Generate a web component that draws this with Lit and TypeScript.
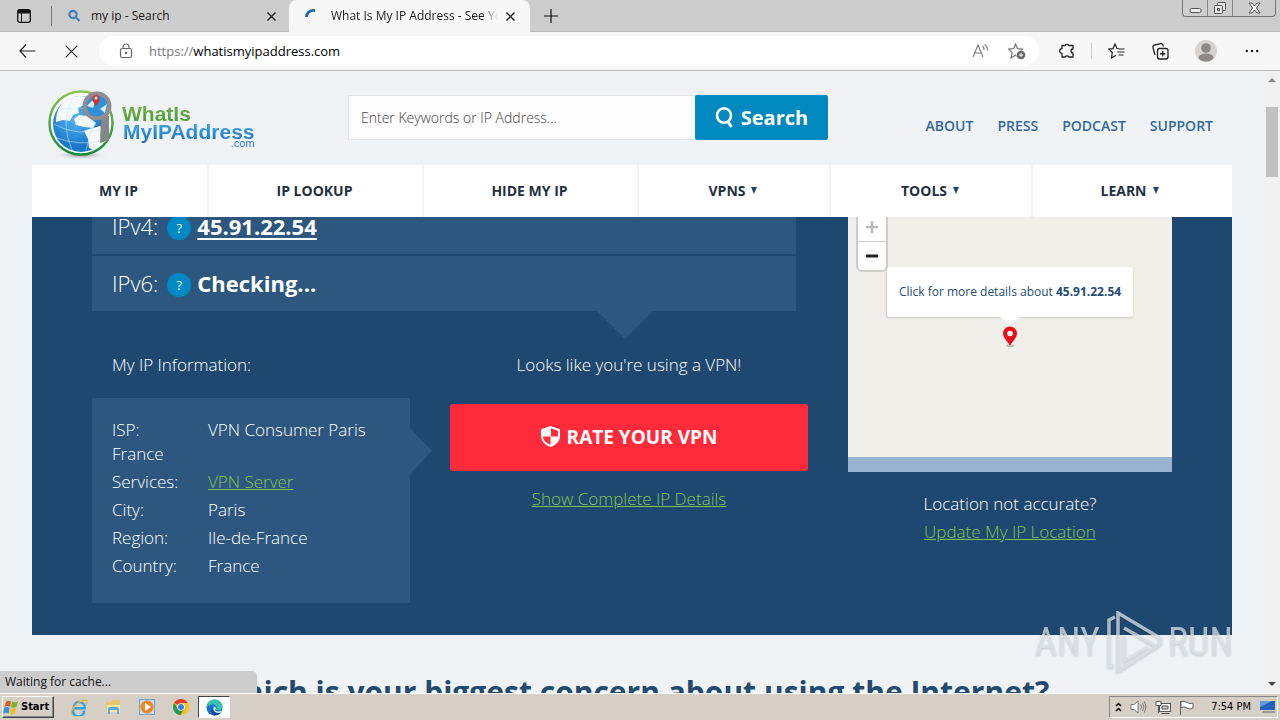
import { LitElement, html, css, svg } from "lit";
import { customElement } from "lit/decorators.js";

@customElement("browser-chrome")
class BrowserChrome extends LitElement {
  static styles = css`
    :host { display: block; font: 12px/16px "Open Sans", sans-serif; color: #1b1b1b; }
    * { box-sizing: border-box; }
    button { border: 0; padding: 0; background: none; display: grid; place-items: center; color: inherit; font: inherit; }
    svg { display: block; }
    .strip { display: flex; height: 32px; background: #cdcdcd; border-bottom: 1px solid #bdbdbd; }
    .panel { width: 48px; }
    .tab { display: flex; align-items: center; position: relative; height: 32px; padding: 0 13px 0 16px; }
    .tab .label { flex: 1; margin-left: 10px; white-space: nowrap; overflow: hidden; }
    .first { width: 238px; margin-left: 3px; }
    .first::before { content: ""; width: 1px; height: 20px; background: #777; position: absolute; left: 0; top: 6px; }
    .active { width: 241px; padding-right: 15px; background: #f7f7f7; border-radius: 8px 8px 0 0; }
    .active .label { mask-image: linear-gradient(to right, #000 90%, transparent); margin: 0 8px 0 12px; }
    .new { width: 42px; }
    .controls { display: flex; margin-left: auto; margin-right: 4px; height: 17px; border: 1px solid #777; border-top: 0; border-radius: 0 0 4px 4px; color: #555; }
    .controls button { width: 25px; border-right: 1px solid #888; }
    .controls button:last-child { width: 42px; border: 0; }
    .bar { display: flex; align-items: center; height: 39px; background: #f7f7f7; border-bottom: 1px solid #bcbcbc; padding: 0 5px; }
    .bar > button { width: 44px; height: 32px; }
    .bar > .tool { width: 46px; }
    .bar > .favorites { width: 42px; }
    .address { flex: 1; display: flex; align-items: center; height: 30px; background: #fff; border-radius: 15px; margin-left: 6px; padding: 0 13px 0 20px; }
    .url { flex: 1; margin-left: 16px; font-size: 13px; line-height: 18px; color: #000; }
    .url span { color: #777; }
    .address button { margin-left: 18px; }
    .sep { width: 1px; height: 16px; background: #ccc; margin-right: 3px; }
    .bar > .puzzle { width: 36px; margin: 0 6px 0 10px; }
  `;
  render() {
    return html`
      <div class="strip">
        <button class="panel" aria-label="Tab actions"><svg width="14" height="14" viewBox="0 0 14 14"><rect x=".7" y=".7" width="12.6" height="12.6" rx="2" fill="none" stroke="#111" stroke-width="1.3"/><path d="M1 1h12v3.5H1z" fill="#111"/><path d="M4.5 4v9" stroke="#111"/></svg></button>
        <div class="tab first">
          <svg width="14" height="14" viewBox="0 0 14 14" fill="none" stroke="#3d7fbd" stroke-width="2.2"><circle cx="6" cy="5.500" r="3.600"/><path d="M8.500 8l4 4"/></svg>
          <span class="label">my ip - Search</span>
          <button aria-label="Close tab">${cross(9, 1.6)}</button>
        </div>
        <div class="tab active">
          <svg width="14" height="14" viewBox="0 0 14 14" fill="none" stroke="#2068b0" stroke-width="2.800"><path d="M1.500 8c0-4 3-7 8.500-6.500"/></svg>
          <span class="label">What Is My IP Address - See Your Public Address</span>
          <button aria-label="Close tab">${cross(9, 1.6)}</button>
        </div>
        <button class="new" aria-label="New tab"><svg width="14" height="14" viewBox="0 0 14 14"><path d="M7 0v14M0 7h14" stroke="#111" stroke-width="1.200"/></svg></button>
        <div class="controls">
          <button aria-label="Minimize"><svg width="13" height="16" viewBox="0 0 13 16"><rect x="1" y="8.500" width="11" height="4" rx="1.500" fill="#eee" stroke="#555"/></svg></button>
          <button aria-label="Restore"><svg width="14" height="14" viewBox="0 0 14 14" fill="#e5e5e5" stroke="#555"><rect x="4.500" y="1.500" width="8" height="8" rx="1"/><rect x="1.500" y="4.500" width="8" height="8" rx="1"/><rect x="4.500" y="7.500" width="2" height="2"/></svg></button>
          <button aria-label="Close"><svg width="13" height="12" viewBox="0 0 13 12"><path d="M1 1h3l2.500 3L9 1h3L8.500 6l3.500 5H9L6.500 8 4 11H1l3.500-5z" fill="#eee" stroke="#555"/></svg></button>
        </div>
      </div>
      <div class="bar">
        <button aria-label="Back"><svg width="17" height="14" viewBox="0 0 17 14" fill="none" stroke="#222" stroke-width="1.200"><path d="M7 .5L1 7l6 6.500M1 7h15.500"/></svg></button>
        <button aria-label="Stop">${cross(13, 0.8)}</button>
        <div class="address">
          <svg width="14" height="16" viewBox="0 0 14 16" fill="none" stroke="#666" stroke-width="1.200"><rect x="1.500" y="5.500" width="11" height="9" rx="1.500"/><path d="M4 5.500V4a3 3 0 016 0v1.500"/><circle cx="7" cy="10" r=".6" fill="#666"/></svg>
          <div class="url"><span>https://</span>whatismyipaddress.com</div>
          <button aria-label="Read aloud"><svg width="18" height="16" viewBox="0 0 18 16" fill="none" stroke="#777" stroke-width="1.100"><path d="M1 14L6 2l5 12M3 10h6.500M10.500 3a5 5 0 011.500 4M12.500 1.500a7 7 0 013 6"/></svg></button>
          <button aria-label="Add to favorites"><svg width="18" height="17" viewBox="0 0 18 17"><path d="M7.500 1l2 4.600 5 .5-3.800 3.400L12 15l-4.500-2.700L3 15l1.200-5.300L.7 6.100l5-.5z" fill="none" stroke="#777" stroke-width="1.200"/><circle cx="13" cy="12" r="4.500" fill="#666" stroke="#fff" stroke-width=".5"/><path d="M13 9.800v4.400M10.800 12h4.400" stroke="#fff"/></svg></button>
        </div>
        <button class="puzzle" aria-label="Extensions"><svg width="16" height="16" viewBox="0 0 16 16" fill="none" stroke="#222" stroke-width="1.300"><path d="M3 2.500h3.200a2 2 0 013.600 0H14V6a2 2 0 100 4v4H9.800a2 2 0 00-3.600 0H3v-3.700a2.300 2.300 0 110-4.600z" stroke-linejoin="round"/></svg></button>
        <span class="sep"></span>
        <button class="favorites" aria-label="Favorites"><svg width="17" height="16" viewBox="0 0 17 16" fill="none" stroke="#222" stroke-width="1.200"><path d="M10.500 5.500H9L7 1 5 5.600.8 6l3.500 3.500L3.500 15 8 12.300M10.500 6h6M9.500 9h7M10.500 12h5"/></svg></button>
        <button class="tool" aria-label="Collections"><svg width="17" height="17" viewBox="0 0 17 17" fill="none" stroke="#222" stroke-width="1.300"><rect x="5.500" y="5.500" width="10.500" height="10.500" rx="2"/><path d="M10.750 8v5.500M8 10.750h5.500M3.500 11.500L2.700 11 1 4.500A2 2 0 012.500 2L9 .7a2 2 0 012 1.300l.4 1.500"/></svg></button>
        <button class="tool" aria-label="Profile"><svg width="22" height="22" viewBox="0 0 22 22"><circle cx="11" cy="11" r="11" fill="#d6d3d1"/><circle cx="11" cy="8" r="4.800" fill="#8d8986"/><ellipse cx="11" cy="17.500" rx="7.500" ry="4" fill="#8d8986"/></svg></button>
        <button class="tool" aria-label="Settings"><svg width="14" height="4" viewBox="0 0 14 4" fill="#222"><circle cx="1.800" cy="2" r="1.300"/><circle cx="7" cy="2" r="1.300"/><circle cx="12.200" cy="2" r="1.300"/></svg></button>
      </div>`;
  }
}

function cross(size: number, weight: number) {
  return html`<svg width=${size} height=${size} viewBox="0 0 10 10">${svg`<path d="M.5 .5l9 9M9.500 .5l-9 9" stroke="#222" stroke-width=${weight}/>`}</svg>`;
}

@customElement("site-header")
class SiteHeader extends LitElement {
  static styles = css`
    :host { display: block; font-family: "Open Sans", sans-serif; }
    * { box-sizing: border-box; }
    a { text-decoration: none; }
    .top { display: flex; height: 94px; padding: 0 19px 0 16px; }
    .logo { display: flex; width: 300px; padding-top: 17px; }
    .words { display: flex; flex-direction: column; align-self: flex-start; margin: 15px 0 0 8px; font: bold 21px/22px "Liberation Sans", sans-serif; }
    .green, .blue { background: linear-gradient(#7cb342, #3f9a3a); background-clip: text; color: transparent; }
    .blue { background-image: linear-gradient(#3aa0dc 20%, #1c6fc0); margin-top: -4px; padding-left: 1px; }
    .com { font: 11px/11px "Liberation Sans", sans-serif; color: #2a82cc; text-align: right; margin-top: -5px; }
    form { display: flex; width: 480px; height: 45px; margin-top: 24px; }
    input { flex: 1; min-width: 0; border: 1px solid #e2e4e6; border-right: 0; background: #fcfcfc; padding: 0 12px; font: 300 14px "Open Sans", sans-serif; color: #444; }
    input::placeholder { color: #444; opacity: 1; }
    .go { width: 133px; display: flex; align-items: center; justify-content: center; gap: 7px; border: 0; border-radius: 2px; background: #0089bf; color: #fff; font: bold 20px "Open Sans", sans-serif; padding: 0; }
    .links { display: flex; gap: 24px; margin: 45px 0 0 auto; font-size: 14px; font-weight: 600; line-height: 20px; }
    .links a { color: #34689b; }
    .menu { display: grid; grid-template-columns: 177fr 215fr 215fr 192fr 202fr 199fr; height: 52px; background: #fff; }
    .menu a { display: flex; align-items: center; justify-content: center; gap: 6px; padding: 0 4px 2px 2px; border-right: 2px solid #f1f2f4; color: #23303f; font-size: 14px; font-weight: 700; }
    .menu a:last-child { border: 0; padding-right: 8px; }
  `;
  render() {
    const caret = html`<svg width="6" height="7" viewBox="0 0 6 7"><path d="M0 0h6L3 7z" fill="#1f4871"/></svg>`;
    return html`
      <div class="top">
        <a class="logo" href="#">
          <svg width="66" height="72" viewBox="0 0 66 72">
            <defs>
              <radialGradient id="sea" cx=".4" cy=".4"><stop offset="0" stop-color="#57b6ef"/><stop offset="1" stop-color="#1878c8"/></radialGradient>
              <linearGradient id="ring" x2="0" y2="1"><stop offset="0" stop-color="#8cc751"/><stop offset="1" stop-color="#12883a"/></linearGradient>
              <radialGradient id="shade"><stop offset="0" stop-color="#888"/><stop offset="1" stop-color="#eff2f5" stop-opacity="0"/></radialGradient>
            </defs>
            <ellipse cx="33" cy="67" rx="28" ry="5" fill="url(#shade)"/>
            <circle cx="33" cy="35" r="31.500" fill="#fff" stroke="url(#ring)" stroke-width="2.500"/>
            <circle cx="33" cy="36" r="28" fill="url(#sea)"/>
            <path d="M12 18C18 9 30 6 39 9l-3 8-6 3 1 5-6 2-3 6-7-1-7 2c0-6 1-11 4-16zM26 31l5-4 8 1 9 7-3 5-9-1-8-2zM38 42l14-4 8 6-2 9-12 9-5-2-1-9-4-8z" fill="#f4f9fc"/>
            <path d="M6 36q24 14 54 4M9 50q22 8 46 3M10 22q20-5 45 2M24 10q-12 25 0 52M38 8q10 26 0 54" fill="none" stroke="#cbe6f7" stroke-width=".8" opacity=".7"/>
            <path d="M53 28h8v24l-9 3z" fill="#85868c"/>
            <circle cx="49" cy="18" r="12.500" fill="#2f90d8" stroke="#918d92" stroke-width="4"/>
            <path d="M39 18q5-7 9-6l-3 8zM52 21l7-5-2 9z" fill="#d8ecf7"/>
            <path d="M48 18c-6-7-3-11 0-11s6 4 0 11z" fill="#d9301d"/><circle cx="48" cy="10" r="1.500" fill="#fff"/>
          </svg>
          <span class="words"><span class="green">WhatIs</span><span class="blue">MyIPAddress</span><span class="com">.com</span></span>
        </a>
        <form @submit=${(e: Event) => e.preventDefault()}>
          <input type="text" aria-label="Search" placeholder="Enter Keywords or IP Address..." />
          <button class="go"><svg width="19" height="21" viewBox="0 0 19 21" fill="none" stroke="#fff"><ellipse cx="9" cy="8.500" rx="7" ry="7.200" stroke-width="2.600"/><path d="M12.500 14l4 6" stroke-width="3"/></svg>Search</button>
        </form>
        <nav class="links">${["ABOUT", "PRESS", "PODCAST", "SUPPORT"].map((t) => html`<a href="#">${t}</a>`)}</nav>
      </div>
      <nav class="menu">
        <a href="#">MY IP</a><a href="#">IP LOOKUP</a><a href="#">HIDE MY IP</a>
        <a href="#">VPNS ${caret}</a><a href="#">TOOLS ${caret}</a><a href="#">LEARN ${caret}</a>
      </nav>`;
  }
}

@customElement("ip-summary")
class IpSummary extends LitElement {
  static styles = css`
    :host { display: block; overflow: hidden; background: #1f4871; color: #fff; font: 300 17px/24px "Open Sans", sans-serif; padding: 0 60px 32px; }
    * { box-sizing: border-box; }
    a { color: #84c250; }
    .grid { display: grid; grid-template-columns: 318fr 358fr 324fr; column-gap: 40px; margin-top: -18px; }
    .addresses { grid-column: 1 / 3; margin-right: 12px; position: relative; height: 140px; }
    .row { display: flex; align-items: center; height: 55px; padding: 0 20px 2px; margin-bottom: 2px; background: #2d577f; font-size: 22px; line-height: 30px; }
    .row button { width: 24px; height: 24px; margin: 4px 6px 0 9px; border: 0; border-radius: 50%; background: #0089c4; color: #fff; font: 400 13px/24px "Open Sans", sans-serif; padding: 0; }
    .row a, .row b { color: #fff; font-weight: 700; }
    .row a { text-decoration-thickness: 2px; text-underline-offset: 3px; }
    .down { position: absolute; left: 505px; top: 112px; width: 56px; height: 28px; background: #2d577f; clip-path: polygon(0 0, 100% 0, 50% 100%); }
    h2 { font: inherit; margin: 14px 0 21px 20px; }
    .card { position: relative; background: #2d577f; height: 205px; padding: 20px; }
    .card::after { content: ""; position: absolute; left: 100%; top: 30px; width: 22px; height: 46px; background: #2d577f; clip-path: polygon(0 0, 100% 50%, 0 100%); }
    dl { margin: 0; }
    .item { margin-bottom: 4px; }
    dt { display: inline-block; width: 96px; }
    dd { display: inline; margin: 0; }
    .middle { text-align: center; }
    .middle p { margin: 14px 0 27px; }
    .rate { display: flex; align-items: center; justify-content: center; gap: 7px; width: 100%; height: 67px; border: 0; border-radius: 3px; background: #ff2a3a; color: #fff; font: bold 19px "Open Sans", sans-serif; padding: 0 0 2px; margin-bottom: 16px; }
    .location { grid-column: 3; grid-row: 1 / 3; text-align: center; padding-top: 18px; }
    .map { position: relative; height: 255px; background: #f1efea; border-bottom: 15px solid #98b2cf; }
    .zoom { position: absolute; left: 8px; top: -7px; width: 32px; border: 2px solid #cfcdc9; border-radius: 0 0 6px 6px; background: #fff; }
    .zoom button { display: grid; place-items: center; width: 28px; height: 29px; border: 0; background: none; padding: 0; }
    .zoom button + button { border-top: 1px solid #ccc; }
    .tip { position: absolute; left: 50%; top: 50px; transform: translateX(-50%); display: block; padding: 16px 12px; border-radius: 3px; background: #fff; box-shadow: 0 1px 2px rgb(0 0 0 / 15%); color: #234d72; font-size: 12px; font-weight: 400; line-height: 18px; white-space: nowrap; text-decoration: none; }
    .tip::after { content: ""; position: absolute; left: 50%; top: 100%; margin-left: -10px; border: 10px solid transparent; border-top: 7px solid #fff; border-bottom: 0; }
    .pin { position: absolute; left: 50%; top: 109px; margin-left: -8px; }
    .wrong { margin: 20px 0 4px; }
  `;
  render() {
    const rows: [string, unknown][] = [
      ["ISP:", "VPN Consumer Paris France"],
      ["Services:", html`<a href="#">VPN Server</a>`],
      ["City:", "Paris"],
      ["Region:", "Ile-de-France"],
      ["Country:", "France"],
    ];
    return html`
      <div class="grid">
        <div class="addresses">
          <div class="row">IPv4: <button aria-label="About IPv4">?</button> <a href="#">45.91.22.54</a></div>
          <div class="row">IPv6: <button aria-label="About IPv6">?</button> <b>Checking...</b></div>
          <span class="down"></span>
        </div>
        <section>
          <h2>My IP Information:</h2>
          <div class="card"><dl>${rows.map(([k, v]) => html`<div class="item"><dt>${k}</dt><dd>${v}</dd></div>`)}</dl></div>
        </section>
        <section class="middle">
          <p>Looks like you're using a VPN!</p>
          <button class="rate"><svg width="19" height="21" viewBox="0 0 19 21"><path d="M9.500 0L19 3.200V10c0 5-4 9-9.500 11C4 19 0 15 0 10V3.200z" fill="#fff"/><path d="M10 2.300l7 2.400v5.800h-7zM2 10.500h7.500v8.300C5 17 2.400 14.500 2 10.500z" fill="#ff2a3a"/></svg>RATE YOUR VPN</button>
          <a href="#">Show Complete IP Details</a>
        </section>
        <section class="location">
          <div class="map">
            <div class="zoom">
              <button aria-label="Zoom in"><svg width="12" height="12" viewBox="0 0 12 12"><path d="M6 0v12M0 6h12" stroke="#bbb" stroke-width="2.500"/></svg></button>
              <button aria-label="Zoom out"><svg width="12" height="4" viewBox="0 0 12 4"><path d="M0 2h12" stroke="#222" stroke-width="3"/></svg></button>
            </div>
            <a class="tip" href="#">Click for more details about <b>45.91.22.54</b></a>
            <svg class="pin" width="16" height="22" viewBox="0 0 16 22"><ellipse cx="8" cy="19.500" rx="4" ry="1.500" fill="#b6bfae"/><path d="M8 19.500C5 15 1 11 1 7.500a7 7 0 0114 0C15 11 11 15 8 19.500z" fill="#e80d18"/><circle cx="8" cy="7.500" r="2.800" fill="#fff"/></svg>
          </div>
          <p class="wrong">Location not accurate?</p>
          <a href="#">Update My IP Location</a>
        </section>
      </div>`;
  }
}

@customElement("task-bar")
class TaskBar extends LitElement {
  static styles = css`
    :host { display: flex; align-items: center; height: 27px; flex: none; background: #d5cfc6; border-top: 1px solid #fff; padding: 0 2px; font: 11px/14px "DejaVu Sans Condensed", "DejaVu Sans", sans-serif; color: #000; }
    * { box-sizing: border-box; }
    button { border: 0; padding: 0; background: none; display: grid; place-items: center; }
    svg { display: block; }
    .start { display: flex; align-items: center; gap: 2px; width: 52px; height: 22px; border: 1px solid; border-color: #fff #444 #444 #fff; box-shadow: inset -1px -1px #888; font: bold 11px/14px "DejaVu Sans Condensed", "DejaVu Sans", sans-serif; margin-right: 8px; }
    .quick { width: 34px; height: 22px; }
    .edge { width: 32px; background: #fff; border: 1px solid; border-color: #444 #fff #fff #444; }
    .tray { margin-left: auto; display: flex; align-items: center; gap: 8px; height: 22px; padding: 0 1px 0 5px; border: 1px solid; border-color: #888 #fff #fff #888; }
    .clock { margin: 0 0 0 8px; }
  `;
  render() {
    return html`
      <button class="start"><svg width="16" height="15" viewBox="0 0 16 15"><path d="M3 2q2-2 5-.5L7 7Q4 5 1.500 7z" fill="#e5592a"/><path d="M9 1.500q3 1.500 6 0L13.500 7q-3 1.500-5.500 0z" fill="#7ab530"/><path d="M1 8q2.500-2 5.500 0l-1 5.500Q3 12 0 13.500z" fill="#3b8de0"/><path d="M7.500 8q3 1.500 5.700 0L12 13.500q-3 1.500-5.500 0z" fill="#f5bd24"/></svg>Start</button>
      <button class="quick" aria-label="Internet Explorer"><svg width="18" height="17" viewBox="0 0 18 17" fill="none"><path d="M14 11.500A5.500 5.500 0 113.800 9.200h11A5.500 5.500 0 003.800 8" stroke="#37a0e5" stroke-width="2.400"/><path d="M2 16C-1 13 7 2 15 1c3-.2 2 3 1 4" stroke="#e9b93c" stroke-width="1.300"/></svg></button>
      <button class="quick" aria-label="Explorer"><svg width="17" height="16" viewBox="0 0 17 16"><path d="M1 3h5l1-2h8v12H1z" fill="#e5c767"/><path d="M2 6h13v7H2z" fill="#f8e8a6"/><path d="M3 15v-5q0-2 2-2h7q2 0 2 2v5h-2v-4H5v4z" fill="#5aa9d6"/></svg></button>
      <button class="quick" aria-label="Media Player"><svg width="16" height="16" viewBox="0 0 16 16"><rect x=".5" y=".5" width="15" height="15" fill="#c5dcec" stroke="#73a2c8"/><circle cx="8" cy="8" r="6.500" fill="#f1861b"/><path d="M6 4l6 4-6 4z" fill="#fff"/></svg></button>
      <button class="quick" aria-label="Chrome"><svg width="16" height="16" viewBox="0 0 16 16"><circle cx="8" cy="8" r="8" fill="#fbc116"/><path d="M8 8L1.200 3.800A8 8 0 0114.800 4H8z" fill="#dd3b2c"/><path d="M1.200 3.800A8 8 0 007.500 16L11 10 8 8 4.500 9.500z" fill="#229b4c"/><circle cx="8" cy="8" r="3.800" fill="#fff"/><circle cx="8" cy="8" r="3" fill="#3b7cf0"/></svg></button>
      <button class="quick edge" aria-label="Edge"><svg width="17" height="17" viewBox="0 0 17 17"><circle cx="8.500" cy="8.500" r="8" fill="#1876c9"/><path d="M.6 8C1 3.500 4 .5 8.500.5S16.500 4 16.500 7.500 13 12 10 11c2-3 0-5.500-3-5.500S1.500 7 .6 8z" fill="#37c3b1"/><path d="M7 7.500c-2 3 1 7 5 6l4-1c-2 3-5 4-7.500 4C5 15.500 3.500 10 7 7.500z" fill="#124b9b"/><path d="M8 7.500c2 0 2 2 1 3.500 1.500 2 5 2 7 .5l-1 2c-5 1.500-9-2-7-6z" fill="#fff"/></svg></button>
      <div class="tray">
        <svg width="7" height="10" viewBox="0 0 7 10" fill="none" stroke="#000" stroke-width="1.500"><path d="M1 4l2.500-2.500L6 4M1 9l2.500-2.500L6 9"/></svg>
        <svg width="17" height="14" viewBox="0 0 17 14" fill="#fff" stroke="#777"><path d="M1 4.500h3L8 1v12L4 9.500H1z"/><path d="M10.500 4.500q2 2.500 0 5M12.500 3q3 4 0 8M14.500 1.500q3 5.500 0 11" fill="none"/></svg>
        <svg width="16" height="15" viewBox="0 0 16 15" fill="#fff" stroke="#555"><rect x="4.500" y="3.500" width="11" height="8"/><path d="M6.500 13.500h8M1 1.500h5v4H1zM3.500 5.500V13"/><path d="M7 6h6v3H7z" fill="#ccc"/></svg>
        <svg width="16" height="15" viewBox="0 0 16 15" fill="#fff" stroke="#666"><path d="M1.500 1v14M2 1.500q3-1 6 1t6 .5v5q-3 2-6 0t-6-.5z"/></svg>
        <span class="clock">7:54 PM</span>
        <svg width="17" height="14" viewBox="0 0 17 14"><path d="M1 1h15v9H1z" fill="#2461bd"/><path d="M1 1h12L1 7z" fill="#649be4"/><path d="M4 11h12v2H3z" fill="#999"/></svg>
      </div>`;
  }
}

@customElement("app-root")
class AppRoot extends LitElement {
  static styles = css`
    :host { display: flex; flex-direction: column; height: 100vh; overflow: hidden; background: #f0f3f6; }
    * { box-sizing: border-box; }
    .view { flex: 1; min-height: 0; display: flex; position: relative; }
    .page { flex: 1; min-width: 0; overflow: hidden; }
    .wrap { max-width: 1200px; width: 95%; margin: 0 auto; }
    h1 { margin: 38px 0 0; text-align: center; color: #234a70; font: 700 30px/38px "Open Sans", sans-serif; white-space: nowrap; }
    .scroll { width: 16px; background: #f1f1f1; display: flex; flex-direction: column; align-items: center; padding: 6px 0; }
    .scroll svg:last-child { margin-top: auto; }
    .thumb { width: 12px; height: 70px; background: #c1c1c1; margin-top: 24px; }
    .status { position: absolute; left: 0; bottom: 0; width: 257px; height: 22px; padding: 2px 5px; background: #cdcdcd; border-radius: 0 5px 0 0; color: #111; font: 12px/18px "Open Sans", sans-serif; }
    .mark { position: absolute; right: 47px; bottom: 20px; display: flex; align-items: center; gap: 6px; color: rgb(222 227 233 / 75%); font: 400 38px/60px "Liberation Sans Narrow", "Roboto Condensed", "Open Sans Condensed", Roboto, sans-serif; filter: drop-shadow(0 1px 1px rgb(0 0 0 / 25%)); }
  `;
  render() {
    return html`
      <browser-chrome></browser-chrome>
      <div class="view">
        <main class="page">
          <div class="wrap">
            <site-header></site-header>
            <ip-summary></ip-summary>
            <h1>Which is your biggest concern about using the Internet?</h1>
          </div>
        </main>
        <div class="scroll">
          <svg width="8" height="6" viewBox="0 0 8 6"><path d="M0 5l4-4 4 4z" fill="#888"/></svg>
          <div class="thumb"></div>
          <svg width="8" height="6" viewBox="0 0 8 6"><path d="M0 1l4 4 4-4z" fill="#444"/></svg>
        </div>
        <div class="status" role="status">Waiting for cache...</div>
        <div class="mark"><span>ANY</span><svg width="56" height="62" viewBox="0 0 56 62" fill="none" stroke="currentColor" stroke-width="3.500"><path d="M8 55H3V9l6-3M12 2l42 25v6L12 60zM18 17l30 17M18 25v25l24-14"/></svg><span>RUN</span></div>
      </div>
      <task-bar></task-bar>`;
  }
}
